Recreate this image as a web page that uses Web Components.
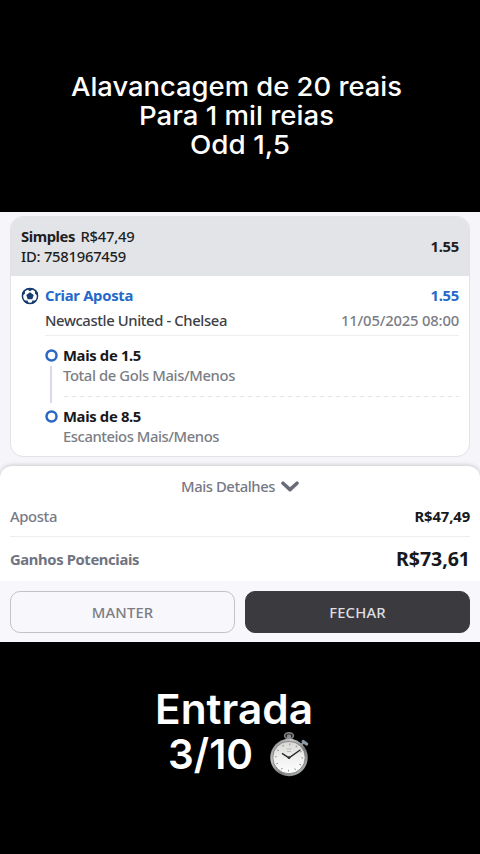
<!DOCTYPE html>
<html lang="pt-BR">
<head>
<meta charset="utf-8">
<title>Aposta</title>
<style>
html,body{margin:0;background:#000}
body{width:480px;height:854px;overflow:hidden}
</style>
</head>
<body>
<bet-story></bet-story>
<script>
const define = (name, html, ready) => {
  const t = document.createElement('template');
  t.innerHTML = html;
  customElements.define(name, class extends HTMLElement {
    connectedCallback() {
      if (!this.shadowRoot) this.attachShadow({mode: 'open'}).append(t.content.cloneNode(true));
      if (ready) ready(this);
    }
  });
};

/* A single line of text that fills the width in its "w" attribute:
   by tracking, or by widening its letters when "stretch" is set. */
define('fit-text', `<style>
:host{display:block;white-space:pre;flex:none}
span{display:inline-block;transform-origin:0 50%}
</style><span><slot></slot></span>`, el => {
  const w = parseFloat(el.getAttribute('w'));
  const s = el.shadowRoot.querySelector('span');
  const natural = s.getBoundingClientRect().width;
  if (el.hasAttribute('stretch')) s.style.transform = 'scaleX(' + w / natural + ')';
  else s.style.letterSpacing = (w - natural) / el.textContent.length + 'px';
  el.style.width = w + 'px';
});

define('ball-icon', `<style>:host{display:block;width:18px;height:18px}svg{display:block}</style>
<svg width="18" height="18" viewBox="0 0 18 18">
<circle cx="9" cy="9" r="7.6" fill="#fff" stroke="#173d70" stroke-width="1.5"/>
<g fill="#173d70"><path d="M9 5.3l3.7 2.7-1.4 4.2H6.7L5.3 8z"/>
<path d="M5.2 1.8L9 4.2l3.8-2.4L9 .9zM1.1 9l3-2.5-.7-4-2.3 3.2zM16.9 9l-3-2.5.7-4 2.3 3.2zM2.6 13.4l4 .2 1.3 3.6-3.3-1.2zM15.4 13.4l-4 .2-1.3 3.6 3.3-1.2z"/></g>
</svg>`);

define('chevron-icon', `<style>:host{display:block;width:18px;height:11px}svg{display:block}</style>
<svg width="18" height="11" viewBox="0 0 18 11"><path d="M2 2.2l7 6.4 7-6.4" fill="none" stroke="#696b7b" stroke-width="3.5" stroke-linecap="round" stroke-linejoin="round"/></svg>`);

define('stopwatch-icon', `<style>:host{display:block;width:40px;height:46px}svg{display:block}</style>
<svg width="40" height="46" viewBox="0 0 40 46">
<defs><linearGradient id="m" x1="0" y1="0" x2="1" y2="1"><stop offset="0" stop-color="#6b6c6d"/><stop offset=".3" stop-color="#c5c6c6"/><stop offset=".6" stop-color="#77797b"/><stop offset="1" stop-color="#c9cccf"/></linearGradient>
<linearGradient id="f" x1="0" y1="0" x2="0" y2="1"><stop offset="0" stop-color="#d6d6d4"/><stop offset=".5" stop-color="#f0f0ef"/><stop offset="1" stop-color="#fff"/></linearGradient></defs>
<ellipse cx="19" cy="3.8" rx="4.4" ry="3" fill="#282828" stroke="#85878a" stroke-width="1.5"/>
<rect x="17" y="2.6" width="4" height="5.8" rx="1" fill="#8b8c8d"/>
<path d="M31 13l3-3" stroke="#858b90" stroke-width="2.4"/>
<path d="M33.2 9.4l3.4 2.6" stroke="#8a9aa8" stroke-width="3.2" stroke-linecap="round"/>
<circle cx="19" cy="25.5" r="18.7" fill="url(#m)"/>
<circle cx="19" cy="25.5" r="16.2" fill="url(#f)" stroke="#686868" stroke-width=".7"/>
<circle cx="19" cy="25.5" r="13.2" fill="none" stroke="#888" stroke-width="1.8" stroke-dasharray=".9 6.01"/>
<path d="M16.5 17h5M17 19.5h4" stroke="#aaa" stroke-width=".7"/>
<path d="M12 21.3l7 4.5 11.5-8" fill="none" stroke="#26282a" stroke-width="1.4"/>
<circle cx="19" cy="25.7" r="1.4" fill="#333"/>
</svg>`);

define('bet-leg', `<style>
:host{display:grid;grid-template-columns:13px 1fr;column-gap:5px;font-size:14.8px}
svg{display:block;margin-top:4px}
.rail{width:2px;height:37px;margin:4px 0 0 5px;background:#d9d8ef}
:host([last]) .rail{display:none}
.name{height:20px;line-height:20px;font-weight:700;color:#17181b}
.sub{height:20px;line-height:20px;color:#7b7d84}
</style><div><svg width="13" height="13" viewBox="0 0 13 13"><circle cx="6.5" cy="6.5" r="5" fill="#fff" stroke="#2a68c5" stroke-width="2.5"/></svg><div class="rail"></div></div>
<div><div class="name"><slot name="name"></slot></div><div class="sub"><slot></slot></div></div>`);

define('bet-card', `<style>
:host{display:block;box-sizing:border-box;width:460px;height:241px;margin:0 10px;border:1px solid #e1e1e6;border-radius:13px;background:#fff;overflow:hidden;font-size:14.8px}
header{display:flex;justify-content:space-between;align-items:center;box-sizing:border-box;height:59px;padding:0 10px 1px;background:#e3e4e8;color:#1d1e22}
.b{font-weight:700}
.line{display:flex;height:20px;line-height:20px;gap:5.5px}
.body{display:grid;grid-template-columns:18px 1fr;column-gap:6px;padding:7px 10px 0 10px}
.row{display:flex;justify-content:space-between;height:25px;line-height:25px}
.blue{color:#2469c9;font-weight:700}
.icon{padding-top:4px}
.match{color:#3e4045}.date{color:#7b7d84}
.legs{border-top:1px solid #eeeef2;margin-top:2px;padding-top:9px}
.dash{height:1px;margin:0 0 9px 19px;background:repeating-linear-gradient(90deg,#e2e0e8 0 4px,transparent 4px 8px)}
bet-leg[first]{height:51px}
</style>
<header><div><div class="line"><fit-text class="b" w="54">Simples</fit-text><fit-text w="54">R$47,49</fit-text></div>
<div class="line"><fit-text w="105">ID: 7581967459</fit-text></div></div><fit-text class="b" w="28.5">1.55</fit-text></header>
<div class="body"><div class="icon"><ball-icon></ball-icon></div><div>
<div class="row blue"><fit-text w="88">Criar Aposta</fit-text><fit-text w="28.5">1.55</fit-text></div>
<div class="row"><fit-text class="match" w="182">Newcastle United - Chelsea</fit-text><fit-text class="date" w="118">11/05/2025 08:00</fit-text></div>
<div class="legs"><bet-leg first><fit-text slot="name" w="78">Mais de 1.5</fit-text><fit-text w="172">Total de Gols Mais/Menos</fit-text></bet-leg>
<div class="dash"></div>
<bet-leg last><fit-text slot="name" w="78">Mais de 8.5</fit-text><fit-text w="156">Escanteios Mais/Menos</fit-text></bet-leg></div>
</div></div>`);

define('action-button', `<style>
:host{display:flex;box-sizing:border-box;width:225px;height:42px;align-items:center;justify-content:center;border:1px solid #c2c2c9;border-radius:10px;color:#7c7c82;background:#f7f7fc;font-size:14.8px;font-weight:500;line-height:20px;padding-bottom:1px}
:host([dark]){background:#3b3a3f;border-color:#3b3a3f;color:#dedee1}
</style><slot></slot>`);

define('bet-summary', `<style>
:host{display:block;height:115px;box-sizing:border-box;padding:0 10px;border-radius:12px 12px 0 0;background:#fff;box-shadow:0 -1px 4px #0000002e;font-size:14.8px;color:#777985}
.more{display:flex;align-items:center;justify-content:center;gap:6px;height:40px;line-height:40px}
.row{display:flex;justify-content:space-between;align-items:center}
.stake{height:30px;margin-top:-5px;padding-bottom:5px;border-bottom:1px solid #eeeef2}
.win{height:43px;font-weight:700;color:#707380}
.v{font-weight:700;color:#17181b}.big{font-size:19.5px}
</style>
<div class="more"><fit-text w="94">Mais Detalhes</fit-text><chevron-icon></chevron-icon></div>
<div class="row stake"><fit-text w="47">Aposta</fit-text><fit-text class="v" w="55.5">R$47,49</fit-text></div>
<div class="row win"><fit-text w="129">Ganhos Potenciais</fit-text><fit-text class="v big" w="74">R$73,61</fit-text></div>`);

define('bet-slip', `<style>
:host{display:block;height:430px;background:#f6f6fa;font-family:"Noto Sans","Open Sans",sans-serif}
.pad{box-sizing:border-box;padding-top:4px;height:254px}
.actions{display:flex;gap:10px;padding:10px 10px 9px;background:#f7f7fc}
</style><div class="pad"><bet-card></bet-card></div><bet-summary></bet-summary>
<div class="actions"><action-button><fit-text w="61.5">MANTER</fit-text></action-button><action-button dark><fit-text w="56.5">FECHAR</fit-text></action-button></div>`);

define('bet-story', `<style>
:host{display:flex;flex-direction:column;width:480px;height:854px;background:#000;color:#fff;font-family:Inter,"Liberation Sans",sans-serif;font-weight:500}
.top{box-sizing:border-box;height:212px;padding-top:72px;font-size:26.3px;line-height:29px}
.top fit-text{height:29px}
.bottom{padding-top:45px;font-size:41.5px;line-height:45px;font-weight:600}
.bottom .a{height:45px;margin-left:155px}
.r{display:flex;margin-left:167.5px;gap:17.5px}
bet-slip{flex:none}
</style>
<div class="top"><fit-text stretch w="331" style="margin-left:71px">Alavancagem de 20 reais</fit-text>
<fit-text stretch w="195" style="margin-left:138.5px">Para 1 mil reias</fit-text>
<fit-text stretch w="100" style="margin-left:190px">Odd 1,5</fit-text></div>
<bet-slip></bet-slip>
<div class="bottom"><fit-text stretch class="a" w="158">Entrada</fit-text>
<div class="r"><fit-text stretch w="85">3/10</fit-text><stopwatch-icon></stopwatch-icon></div></div>`);
</script>
</body>
</html>
